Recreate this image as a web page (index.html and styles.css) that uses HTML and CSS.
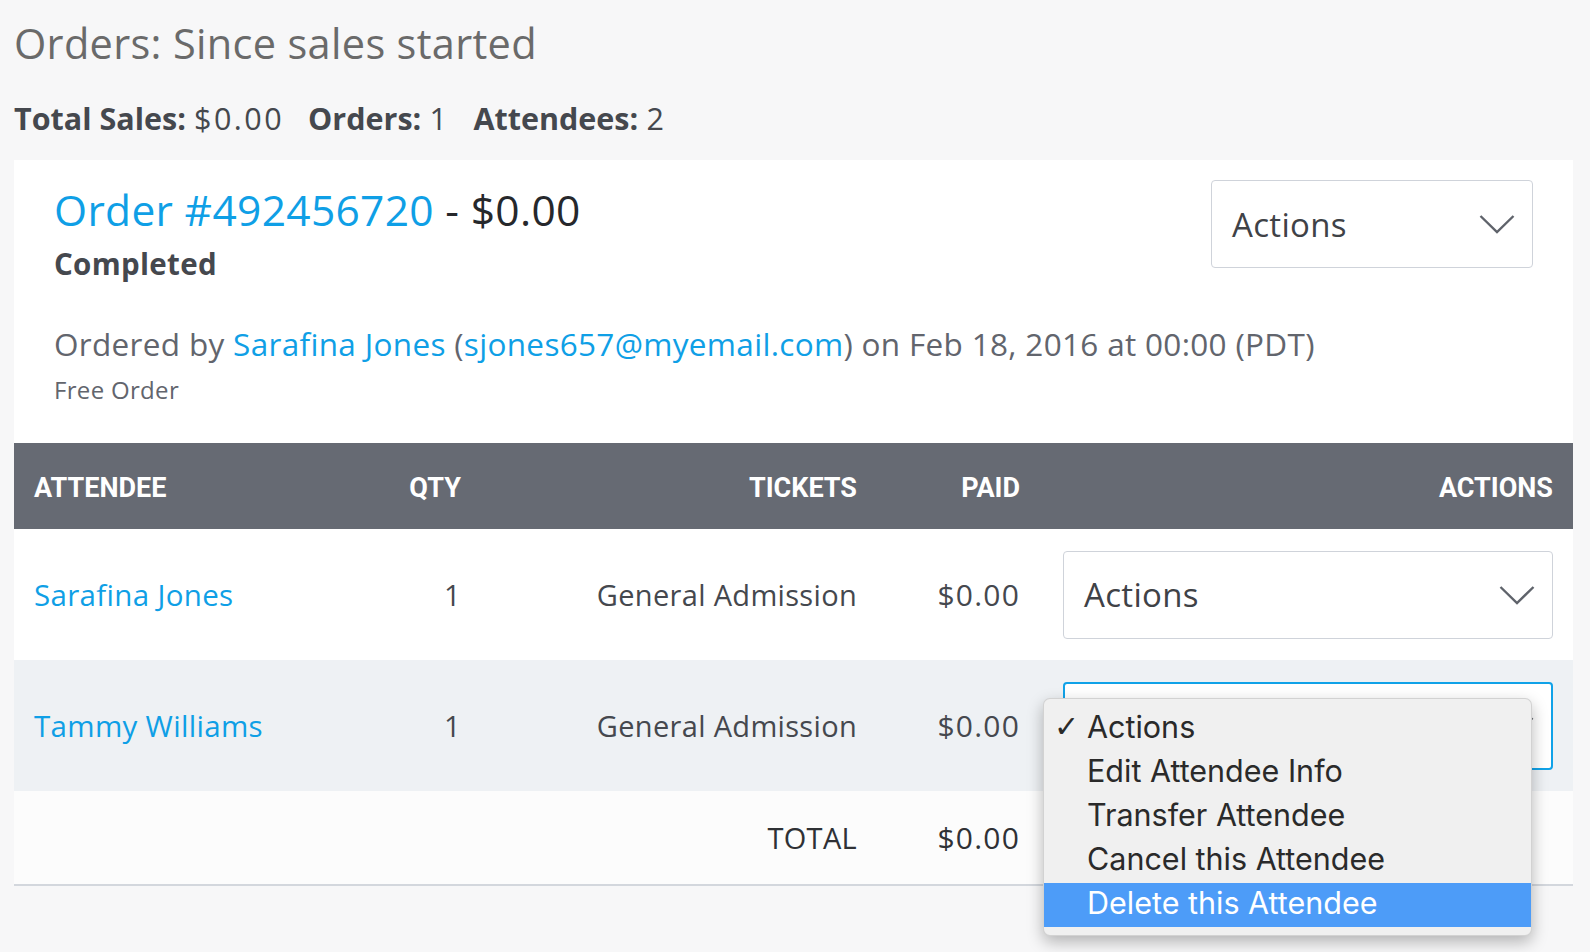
FILE: index.html
```html
<!DOCTYPE html>
<html lang="en">
<head>
<meta charset="utf-8">
<title>Orders</title>
<link rel="stylesheet" href="styles.css">
</head>
<body>
<div class="page">
  <h1 class="title">Orders: Since sales started</h1>
  <div class="stats">
    <span class="stat"><b>Total Sales:</b> <span class="val">$0.00</span></span>
    <span class="stat"><b>Orders:</b> <span class="val">1</span></span>
    <span class="stat"><b>Attendees:</b> <span class="val">2</span></span>
  </div>

  <section class="card">
    <div class="order-head">
      <div class="order-info">
        <div class="order-line"><a class="link">Order #492456720</a> - $0.00</div>
        <div class="status">Completed</div>
        <div class="ordered">Ordered by <a class="link">Sarafina Jones</a> (<a class="link">sjones657@myemail.com</a>) on Feb 18, 2016 at 00:00 (PDT)</div>
        <div class="free">Free Order</div>
      </div>
      <div class="select select-head">
        <span>Actions</span>
        <svg class="chev" viewBox="0 0 36 20" width="36" height="20"><polyline points="1.5,2 18,18 34.5,2"/></svg>
      </div>
    </div>

    <div class="table">
      <div class="trow thead">
        <div class="c-name">ATTENDEE</div>
        <div class="c-qty">QTY</div>
        <div class="c-tix">TICKETS</div>
        <div class="c-paid">PAID</div>
        <div class="c-act">ACTIONS</div>
      </div>
      <div class="trow tbody">
        <div class="c-name"><a class="link">Sarafina Jones</a></div>
        <div class="c-qty">1</div>
        <div class="c-tix">General Admission</div>
        <div class="c-paid">$0.00</div>
        <div class="c-act">
          <div class="select-wrap">
            <div class="select">
              <span>Actions</span>
              <svg class="chev" viewBox="0 0 36 20" width="36" height="20"><polyline points="1.5,2 18,18 34.5,2"/></svg>
            </div>
          </div>
        </div>
      </div>
      <div class="trow tbody alt">
        <div class="c-name"><a class="link">Tammy Williams</a></div>
        <div class="c-qty">1</div>
        <div class="c-tix">General Admission</div>
        <div class="c-paid">$0.00</div>
        <div class="c-act">
          <div class="select-wrap">
            <div class="select focused">
              <span>Actions</span>
              <svg class="chev" viewBox="0 0 36 20" width="36" height="20"><polyline points="1.5,2 18,18 34.5,2"/></svg>
            </div>
            <ul class="menu">
              <li class="item checked"><span class="check">✓</span>Actions</li>
              <li class="item">Edit Attendee Info</li>
              <li class="item">Transfer Attendee</li>
              <li class="item">Cancel this Attendee</li>
              <li class="item hl">Delete this Attendee</li>
            </ul>
          </div>
        </div>
      </div>
      <div class="trow tfoot">
        <div class="c-name"></div>
        <div class="c-qty"></div>
        <div class="c-tix">TOTAL</div>
        <div class="c-paid">$0.00</div>
        <div class="c-act"></div>
      </div>
    </div>
  </section>
</div>
</body>
</html>
```

FILE: styles.css
```css
* { box-sizing: border-box; }

html, body {
  margin: 0;
  padding: 0;
  background: #f7f7f8;
}

body {
  font-family: "Open Sans", "Noto Sans", sans-serif;
  color: #45484e;
  letter-spacing: 0.02em;
  min-height: 952px;
}

.page {
  padding: 19px 17px 80px 14px;
}

.title {
  margin: 0;
  font-size: 41.5px;
  line-height: 48px;
  font-weight: 400;
  color: #6a6a6a;
}

.stats {
  margin-top: 31px;
  font-size: 30.5px;
  line-height: 40px;
  color: #45484e;
  display: flex;
  gap: 24px;
}

.stats b { font-weight: 700; letter-spacing: 0; }
.stats .val { letter-spacing: 0.08em; }

.card {
  margin-top: 22px;
  background: #fff;
}

.link {
  color: #0f9fe6;
  text-decoration: none;
}

.order-head {
  display: flex;
  justify-content: space-between;
  align-items: flex-start;
  padding: 20px 40px 38px 40px;
}

.order-info {
  min-width: 0;
}

.order-line {
  margin-top: 5px;
  font-size: 42.5px;
  line-height: 50px;
  color: #26282c;
  white-space: nowrap;
}

.status {
  margin-top: 11px;
  font-size: 29.5px;
  line-height: 36px;
  font-weight: 700;
}

.ordered {
  margin-top: 42px;
  font-size: 31.5px;
  line-height: 40px;
  color: #62656d;
  white-space: nowrap;
}

.free {
  margin-top: 11px;
  font-size: 24px;
  line-height: 30px;
  color: #62656d;
}

.select {
  display: flex;
  align-items: center;
  justify-content: space-between;
  height: 88px;
  padding: 0 17px 0 20px;
  background: #fff;
  border: 1px solid #cfd3da;
  border-radius: 4px;
  font-size: 33px;
  color: #3f4247;
}

.select-head {
  width: 322px;
  flex-shrink: 0;
}

.chev {
  display: block;
  fill: none;
  stroke: #5f636b;
  stroke-width: 2.4;
}

.select.focused {
  border: 2px solid #10a2e8;
}

.trow {
  display: grid;
  grid-template-columns: 307px 120px 396px 163px 1fr;
  align-items: center;
  padding: 0 20px;
}

.c-qty, .c-tix, .c-paid { text-align: right; }
.c-act { padding-left: 43px; }

.thead {
  height: 86px;
  background: #666a73;
  color: #fff;
  font-family: Roboto, "Open Sans", sans-serif;
  font-weight: 700;
  font-size: 27px;
  letter-spacing: 0;
  padding-top: 3px;
}

.thead .c-act { text-align: right; }

.tbody {
  height: 131px;
  font-size: 29px;
  color: #45484e;
}

.tbody .c-name { font-size: 29.5px; }
.tbody .c-paid { font-size: 30px; letter-spacing: 0.04em; }

.tbody.alt { background: #eef1f4; }

.tfoot {
  height: 95px;
  background: #fcfcfc;
  border-bottom: 2px solid #d3d7dd;
  font-size: 29px;
  color: #2f3135;
}

.tfoot .c-paid { font-size: 30px; letter-spacing: 0.04em; }

.select-wrap {
  position: relative;
}

.menu {
  position: absolute;
  top: 16px;
  left: -20px;
  width: 489px;
  margin: 0;
  padding: 8px 0;
  list-style: none;
  background: #f0f0f0;
  border: 1px solid rgba(0, 0, 0, 0.12);
  border-radius: 7px;
  box-shadow: 0 6px 16px rgba(0, 0, 0, 0.28);
  font-family: Inter, "Liberation Sans", sans-serif;
  font-size: 30.5px;
  letter-spacing: 0;
  color: #2a2a2a;
  z-index: 5;
}

.item {
  height: 44px;
  line-height: 40px;
  padding-left: 43px;
  position: relative;
}

.check {
  position: absolute;
  left: 10px;
  top: 0;
  font-size: 30px;
  font-family: "DejaVu Sans", sans-serif;
}

.item.hl {
  background: #4d9cf8;
  color: #fff;
}
```
